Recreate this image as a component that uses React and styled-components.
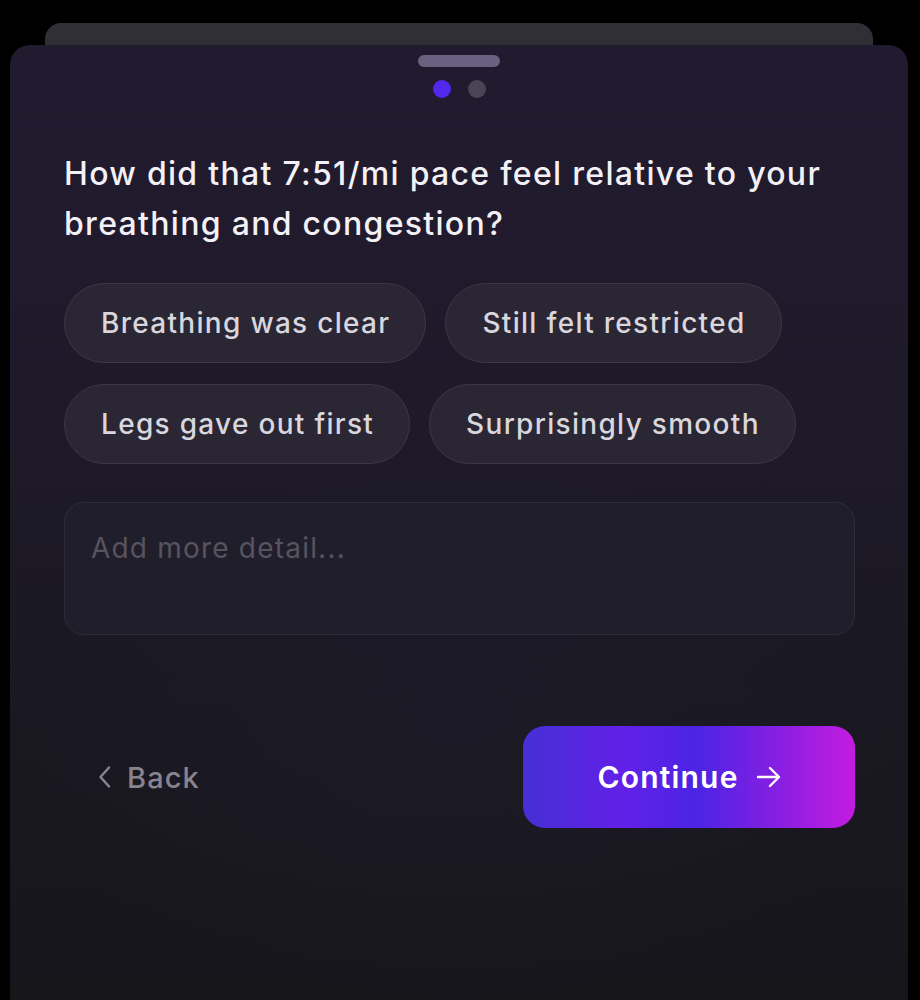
import styled, { createGlobalStyle } from 'styled-components';

const GlobalStyle = createGlobalStyle`
  html, body {
    margin: 0;
    padding: 0;
    background: #000;
  }
  body {
    font-family: Inter, "Noto Sans", "Liberation Sans", sans-serif;
    -webkit-font-smoothing: antialiased;
  }
`;

const options = [
  ['Breathing was clear', 'Still felt restricted'],
  ['Legs gave out first', 'Surprisingly smooth'],
];

export default function App() {
  return (
    <>
      <GlobalStyle />
      <Page>
        <BackCard />
        <Sheet>
          <Handle />
          <Dots>
            <Dot $active />
            <Dot />
          </Dots>

          <Question>
            How did that 7:51/mi pace feel relative to your breathing and congestion?
          </Question>

          <ChipRows>
            {options.map((row, i) => (
              <ChipRow key={i}>
                {row.map((label) => (
                  <Chip key={label}>{label}</Chip>
                ))}
              </ChipRow>
            ))}
          </ChipRows>

          <Detail placeholder="Add more detail..." />

          <Footer>
            <BackButton>
              <svg width="14" height="26" viewBox="0 0 14 26" fill="none">
                <path d="M11 3.5 L2.5 13 L11 22.5" stroke="currentColor" strokeWidth="2.5" strokeLinecap="round" strokeLinejoin="round" />
              </svg>
              Back
            </BackButton>
            <ContinueButton>
              Continue
              <svg width="28" height="26" viewBox="0 0 28 26" fill="none">
                <path d="M3 13 H24 M15 4 L24 13 L15 22" stroke="currentColor" strokeWidth="2.4" strokeLinecap="round" strokeLinejoin="round" />
              </svg>
            </ContinueButton>
          </Footer>
        </Sheet>
      </Page>
    </>
  );
}

const Page = styled.div`
  min-height: 100vh;
  background: #000;
  padding-top: 23px;
  box-sizing: border-box;
  overflow: hidden;
`;

const BackCard = styled.div`
  height: 40px;
  margin: 0 47px 0 45px;
  background: #302f35;
  border-radius: 16px 16px 0 0;
`;

const Sheet = styled.div`
  margin: -18px 12px 0 10px;
  min-height: 955px;
  padding: 10px 53px 40px 54px;
  box-sizing: border-box;
  border-radius: 20px 20px 0 0;
  background:
    radial-gradient(ellipse 70% 45% at 50% 70%, rgba(30, 28, 42, 0.55), transparent 70%),
    linear-gradient(180deg, #221b30 0%, #1f1a2a 35%, #1a1822 65%, #17161b 100%);
  display: flex;
  flex-direction: column;
`;

const Handle = styled.div`
  align-self: center;
  width: 82px;
  height: 12px;
  border-radius: 6px;
  background: #6a6080;
  margin-left: -1px;
`;

const Dots = styled.div`
  align-self: center;
  display: flex;
  gap: 17px;
  margin-top: 13px;
  margin-left: -1px;
`;

const Dot = styled.span`
  width: 18px;
  height: 18px;
  border-radius: 50%;
  background: ${(p) => (p.$active ? '#5128ec' : '#4a4555')};
`;

const Question = styled.h1`
  margin: 51px 0 0;
  font-size: 32px;
  line-height: 50px;
  font-weight: 500;
  color: #f3f1f6;
  letter-spacing: 1.3px;
  max-width: 790px;
`;

const ChipRows = styled.div`
  display: flex;
  flex-direction: column;
  gap: 21px;
  margin-top: 34px;
`;

const ChipRow = styled.div`
  display: flex;
  gap: 19px;
`;

const Chip = styled.button`
  height: 80px;
  padding: 0 35px 0 36px;
  border-radius: 40px;
  border: 1.5px solid #3b3745;
  background: #2a2633;
  color: #d9d6de;
  font-family: inherit;
  font-size: 28px;
  font-weight: 500;
  letter-spacing: 1.3px;
  cursor: pointer;
`;

const Detail = styled.textarea`
  margin-top: 38px;
  height: 133px;
  box-sizing: border-box;
  resize: none;
  border-radius: 20px;
  border: 1.5px solid #2f2c39;
  background: #211e2b;
  padding: 28px 26px;
  color: #d9d6de;
  font-family: inherit;
  font-size: 28px;
  letter-spacing: 1.2px;
  outline: none;

  &::placeholder {
    color: #57535f;
  }
`;

const Footer = styled.div`
  display: flex;
  align-items: center;
  justify-content: space-between;
  margin-top: 91px;
`;

const BackButton = styled.button`
  display: flex;
  align-items: center;
  gap: 15px;
  margin-left: 34px;
  background: none;
  border: none;
  padding: 0;
  color: #88848f;
  font-family: inherit;
  font-size: 29px;
  font-weight: 500;
  letter-spacing: 1.1px;
  cursor: pointer;
`;

const ContinueButton = styled.button`
  width: 332px;
  height: 102px;
  border-radius: 22px;
  border: none;
  display: flex;
  align-items: center;
  justify-content: center;
  gap: 16px;
  padding-right: 4px;
  color: #fff;
  font-family: inherit;
  font-size: 30px;
  font-weight: 600;
  letter-spacing: 1.2px;
  cursor: pointer;
  background: linear-gradient(90deg, #4530d4 0%, #6220e8 30%, #4b24e4 52%, #8a1fe2 78%, #c41ce0 100%);
`;
